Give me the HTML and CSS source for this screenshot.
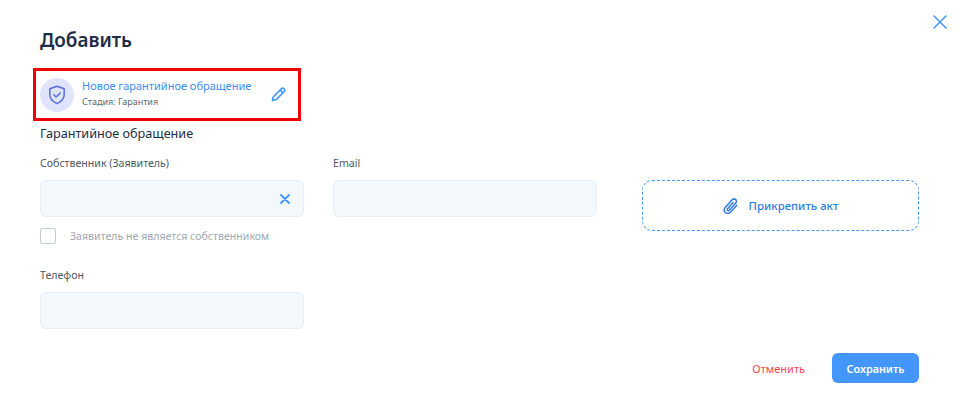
FILE: index.html
```html
<!DOCTYPE html>
<html lang="ru">
<head>
    <meta charset="UTF-8">
    <title>Добавить</title>
    <link rel="stylesheet" href="styles.css">
</head>
<body>
    <div class="modal">
        <button class="close" aria-label="Закрыть">
            <svg width="14" height="14" viewBox="0 0 14 14" fill="none" stroke="#4396fb" stroke-width="1.5" stroke-linecap="round"><path d="M1 1l12 12M13 1L1 13"/></svg>
        </button>
        <h1 class="title">Добавить</h1>

        <div class="stage">
            <div class="stage-icon">
                <svg width="18" height="20" viewBox="0 0 18 20" fill="none" stroke="#5b6ee1" stroke-width="1.5" stroke-linecap="round" stroke-linejoin="round"><path d="M9 1.2l7.2 2.6v5.4c0 4.4-3 7.6-7.2 9.4-4.2-1.8-7.2-5-7.2-9.4V3.800z"/><path d="M5.800 9.800l2.300 2.200 4.100-3.900"/></svg>
            </div>
            <div class="stage-text">
                <div class="stage-name">Новое гарантийное обращение</div>
                <div class="stage-sub">Стадия: Гарантия</div>
            </div>
            <svg class="pencil" width="15" height="15" viewBox="0 0 16 16" fill="none" stroke="#4396fb" stroke-width="1.7" stroke-linejoin="round"><path d="M1.500 14.500l.8-3.800L11.200 1.800a1.700 1.700 0 0 1 2.400 0l.6.6a1.700 1.700 0 0 1 0 2.400L5.300 13.700z"/><path d="M9.800 3.200l3 3"/></svg>
        </div>

        <div class="section">Гарантийное обращение</div>

        <div class="form">
            <div class="col">
                <label class="label">Собственник (Заявитель)</label>
                <div class="input">
                    <svg width="10" height="10" viewBox="0 0 10 10" fill="none" stroke="#4396fb" stroke-width="1.800" stroke-linecap="round"><path d="M1 1l8 8M9 1L1 9"/></svg>
                </div>
                <div class="check-row">
                    <span class="check"></span>
                    <span class="check-text">Заявитель не является собственником</span>
                </div>
                <label class="label label-phone">Телефон</label>
                <div class="input"></div>
            </div>
            <div class="col">
                <label class="label">Email</label>
                <div class="input"></div>
            </div>
            <div class="col col-attach">
                <div class="attach">
                    <svg width="16" height="18" viewBox="0 0 16 18" fill="none" stroke="#2f7de1" stroke-width="1.500" stroke-linecap="round" stroke-linejoin="round"><path d="M13.800 8.300l-5.900 6.500c-1.700 1.800-4.200 2-5.600.7-1.400-1.300-1.300-3.600.3-5.400l6.300-7c1.100-1.200 2.800-1.400 3.800-.5 1 .9.900 2.500-.2 3.700l-6 6.700c-.6.600-1.400.7-1.900.3-.5-.5-.4-1.300.1-1.900l5.300-5.900"/></svg>
                    <span>Прикрепить акт</span>
                </div>
            </div>
        </div>

        <div class="actions">
            <button class="cancel">Отменить</button>
            <button class="save">Сохранить</button>
        </div>
    </div>
</body>
</html>
```

FILE: styles.css
```css
* {
    box-sizing: border-box;
}
body {
    margin: 0;
    background: white;
    font-family: "Noto Sans", sans-serif;
    color: #1f2d3d;
}
button {
    font-family: inherit;
    border: none;
    background: none;
    padding: 0;
    cursor: pointer;
}
.modal {
    position: relative;
    width: 960px;
    height: 400px;
    padding: 27px 40px 0;
    overflow: hidden;
}
.close {
    position: absolute;
    top: 15px;
    right: 13px;
    width: 14px;
    height: 14px;
    display: flex;
}
.title {
    margin: 0;
    font-size: 18.900px;
    line-height: 26px;
    font-weight: 600;
    color: #1e2c45;
}
.stage {
    display: flex;
    align-items: center;
    width: 268px;
    height: 53px;
    margin: 15px 0 0 -7px;
    padding: 0 12px 0 4px;
    border: 3px solid #f00000;
}
.stage-icon {
    flex: none;
    width: 34px;
    height: 34px;
    border-radius: 50%;
    background: #dfe3fb;
    display: flex;
    align-items: center;
    justify-content: center;
}
.stage-text {
    flex: 1;
    margin: -2px 0 0 8px;
}
.stage-name {
    font-size: 11px;
    line-height: 16px;
    color: #3b8df5;
}
.stage-sub {
    margin-top: 1px;
    font-size: 9px;
    line-height: 14px;
    color: #5e6875;
}
.section {
    margin-top: 3px;
    font-size: 12.650px;
    line-height: 18px;
    color: #1e2c45;
}
.form {
    display: grid;
    grid-template-columns: 264px 264px 277px;
    column-gap: 29px;
    margin-top: 13px;
}
.col-attach {
    margin-left: 16px;
    padding-top: 25px;
    width: 277px;
}
.label {
    display: block;
    font-size: 10.600px;
    line-height: 16px;
    color: #4d5763;
}
.input {
    height: 37px;
    margin-top: 9px;
    padding-right: 13px;
    background: #f3f8fc;
    border: 1px solid #e8eef3;
    border-radius: 6px;
    display: flex;
    align-items: center;
    justify-content: flex-end;
}
.check-row {
    display: flex;
    align-items: center;
    margin-top: 11px;
}
.check {
    flex: none;
    width: 16px;
    height: 16px;
    border: 1.500px solid #c5ccd3;
    border-radius: 3px;
}
.check-text {
    margin-left: 14px;
    font-size: 10.600px;
    line-height: 16px;
    color: #a0a8b1;
}
.label-phone {
    margin-top: 23px;
}
.attach {
    height: 51px;
    border: 1px dashed #4396fb;
    border-radius: 10px;
    display: flex;
    align-items: center;
    justify-content: center;
    gap: 10px;
    font-size: 11.400px;
    font-weight: 500;
    color: #2f7de1;
}
.actions {
    display: flex;
    justify-content: flex-end;
    align-items: center;
    margin: 24px 1px 0 0;
}
.cancel {
    margin-right: 27px;
    font-size: 11px;
    color: #f9484f;
}
.save {
    width: 87px;
    height: 30px;
    background: #4396fb;
    border-radius: 6px;
    color: white;
    font-size: 10.800px;
    font-weight: 600;
}
```
